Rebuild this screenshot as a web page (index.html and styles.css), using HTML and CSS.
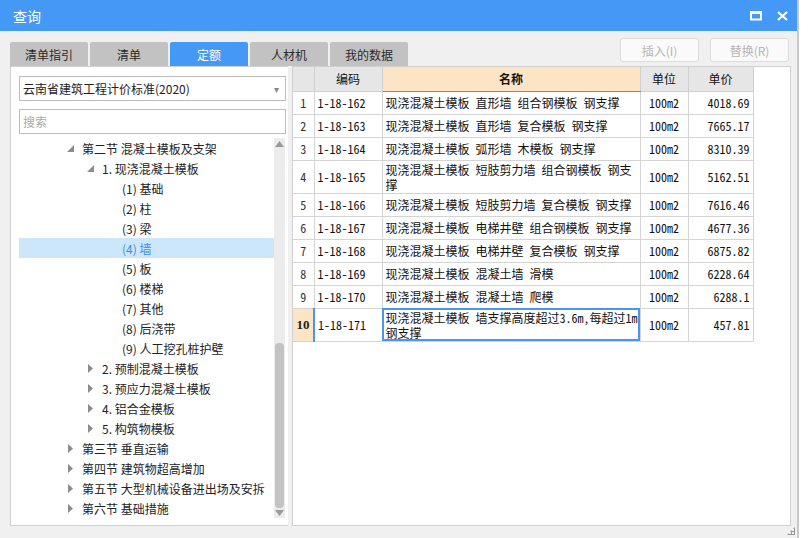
FILE: index.html
```html
<!DOCTYPE html>
<html lang="zh">
<head>
<meta charset="utf-8">
<title>查询</title>
<link rel="stylesheet" href="styles.css">
</head>
<body>
<div class="win">
  <div class="titlebar">
    <span class="title">查询</span>
    <div class="ctrls">
      <svg class="ic" width="12" height="10" viewBox="0 0 12 10"><rect x="1" y="1.5" width="10" height="7" fill="none" stroke="#fff" stroke-width="2"/><rect x="0" y="0" width="12" height="3" fill="#fff"/></svg>
      <svg class="ic" width="11" height="10" viewBox="0 0 11 10"><path d="M1 1 L10 9 M10 1 L1 9" stroke="#fff" stroke-width="2.2" fill="none"/></svg>
    </div>
  </div>
  <div class="toolbar">
    <div class="tabs">
      <div class="tab">清单指引</div>
      <div class="tab">清单</div>
      <div class="tab active">定额</div>
      <div class="tab">人材机</div>
      <div class="tab">我的数据</div>
    </div>
    <div class="actions">
      <button class="btn">插入(I)</button>
      <button class="btn">替换(R)</button>
    </div>
  </div>
  <div class="main">
    <div class="left">
      <div class="select"><span>云南省建筑工程计价标准(2020)</span><span class="caret">▾</span></div>
      <div class="search">搜索</div>
      <div class="treewrap">
        <div class="tree">
          <div class="row l0"><span class="tg"><svg width="7" height="7" viewBox="0 0 7 7"><path d="M7 0 L7 7 L0 7 Z" fill="#8c8c8c"/></svg></span>第二节 混凝土模板及支架</div>
          <div class="row l1"><span class="tg"><svg width="7" height="7" viewBox="0 0 7 7"><path d="M7 0 L7 7 L0 7 Z" fill="#8c8c8c"/></svg></span>1. 现浇混凝土模板</div>
          <div class="row l2"><span class="tg"></span>(1) 基础</div>
          <div class="row l2"><span class="tg"></span>(2) 柱</div>
          <div class="row l2"><span class="tg"></span>(3) 梁</div>
          <div class="row l2 sel"><span class="tg"></span>(4) 墙</div>
          <div class="row l2"><span class="tg"></span>(5) 板</div>
          <div class="row l2"><span class="tg"></span>(6) 楼梯</div>
          <div class="row l2"><span class="tg"></span>(7) 其他</div>
          <div class="row l2"><span class="tg"></span>(8) 后浇带</div>
          <div class="row l2"><span class="tg"></span>(9) 人工挖孔桩护壁</div>
          <div class="row l1"><span class="tg"><svg width="5" height="9" viewBox="0 0 5 9"><path d="M0 0 L5 4.5 L0 9 Z" fill="#8c8c8c"/></svg></span>2. 预制混凝土模板</div>
          <div class="row l1"><span class="tg"><svg width="5" height="9" viewBox="0 0 5 9"><path d="M0 0 L5 4.5 L0 9 Z" fill="#8c8c8c"/></svg></span>3. 预应力混凝土模板</div>
          <div class="row l1"><span class="tg"><svg width="5" height="9" viewBox="0 0 5 9"><path d="M0 0 L5 4.5 L0 9 Z" fill="#8c8c8c"/></svg></span>4. 铝合金模板</div>
          <div class="row l1"><span class="tg"><svg width="5" height="9" viewBox="0 0 5 9"><path d="M0 0 L5 4.5 L0 9 Z" fill="#8c8c8c"/></svg></span>5. 构筑物模板</div>
          <div class="row l0"><span class="tg"><svg width="5" height="9" viewBox="0 0 5 9"><path d="M0 0 L5 4.5 L0 9 Z" fill="#8c8c8c"/></svg></span>第三节 垂直运输</div>
          <div class="row l0"><span class="tg"><svg width="5" height="9" viewBox="0 0 5 9"><path d="M0 0 L5 4.5 L0 9 Z" fill="#8c8c8c"/></svg></span>第四节 建筑物超高增加</div>
          <div class="row l0"><span class="tg"><svg width="5" height="9" viewBox="0 0 5 9"><path d="M0 0 L5 4.5 L0 9 Z" fill="#8c8c8c"/></svg></span>第五节 大型机械设备进出场及安拆</div>
          <div class="row l0"><span class="tg"><svg width="5" height="9" viewBox="0 0 5 9"><path d="M0 0 L5 4.5 L0 9 Z" fill="#8c8c8c"/></svg></span>第六节 基础措施</div>
        </div>
        <div class="vscroll">
          <svg width="9" height="6" viewBox="0 0 9 6"><path d="M0 6 L4.5 0 L9 6 Z" fill="#9a9a9a"/></svg>
          <div class="track"><div class="thumb"></div></div>
          <svg width="9" height="6" viewBox="0 0 9 6"><path d="M0 0 L4.5 6 L9 0 Z" fill="#9a9a9a"/></svg>
        </div>
      </div>
    </div>
    <div class="right">
      <table class="grid">
        <colgroup><col class="c0"><col class="c1"><col class="c2"><col class="c3"><col class="c4"></colgroup>
        <thead>
          <tr><th></th><th>编码</th><th class="hsel">名称</th><th>单位</th><th>单价</th></tr>
        </thead>
        <tbody>
          <tr><td class="rn">1</td><td>1-18-162</td><td>现浇混凝土模板 直形墙 组合钢模板 钢支撑</td><td class="u">100m2</td><td class="p">4018.69</td></tr>
          <tr><td class="rn">2</td><td>1-18-163</td><td>现浇混凝土模板 直形墙 复合模板 钢支撑</td><td class="u">100m2</td><td class="p">7665.17</td></tr>
          <tr><td class="rn">3</td><td>1-18-164</td><td>现浇混凝土模板 弧形墙 木模板 钢支撑</td><td class="u">100m2</td><td class="p">8310.39</td></tr>
          <tr class="tall"><td class="rn">4</td><td>1-18-165</td><td>现浇混凝土模板 短肢剪力墙 组合钢模板 钢支<br>撑</td><td class="u">100m2</td><td class="p">5162.51</td></tr>
          <tr><td class="rn">5</td><td>1-18-166</td><td>现浇混凝土模板 短肢剪力墙 复合模板 钢支撑</td><td class="u">100m2</td><td class="p">7616.46</td></tr>
          <tr><td class="rn">6</td><td>1-18-167</td><td>现浇混凝土模板 电梯井壁 组合钢模板 钢支撑</td><td class="u">100m2</td><td class="p">4677.36</td></tr>
          <tr><td class="rn">7</td><td>1-18-168</td><td>现浇混凝土模板 电梯井壁 复合模板 钢支撑</td><td class="u">100m2</td><td class="p">6875.82</td></tr>
          <tr><td class="rn">8</td><td>1-18-169</td><td>现浇混凝土模板 混凝土墙 滑模</td><td class="u">100m2</td><td class="p">6228.64</td></tr>
          <tr><td class="rn">9</td><td>1-18-170</td><td>现浇混凝土模板 混凝土墙 爬模</td><td class="u">100m2</td><td class="p">6288.1</td></tr>
          <tr class="tall cur"><td class="rn rsel">10</td><td>1-18-171</td><td class="csel">现浇混凝土模板 墙支撑高度超过3.6m,每超过1m<br>钢支撑</td><td class="u">100m2</td><td class="p">457.81</td></tr>
        </tbody>
      </table>
    </div>
  </div>
  <div class="status"><span class="grip"></span></div>
</div>
</body>
</html>
```
FILE: styles.css
```css
* { box-sizing: border-box; }
html, body { margin: 0; padding: 0; }
body {
  width: 809px;
  height: 538px;
  background: #ffffff;
  font-family: "Noto Sans CJK SC", "Noto Sans", sans-serif;
  font-size: 12px;
  color: #222;
  overflow: hidden;
}
.win {
  width: 799px;
  height: 538px;
  background: #f0f0f0;
  border-right: 2px solid #c9c9c9;
  display: flex;
  flex-direction: column;
}
.titlebar {
  height: 31px;
  flex: none;
  background: #4399f5;
  display: flex;
  align-items: center;
  justify-content: space-between;
  padding: 0 9px 0 13px;
}
.title { color: #fff; font-size: 14px; }
.ctrls { display: flex; align-items: center; gap: 15px; }
.ic { display: block; }
.toolbar {
  height: 35px;
  flex: none;
  display: flex;
  justify-content: space-between;
  padding: 0 8px 0 10px;
}
.tabs { display: flex; gap: 2px; align-items: flex-end; }
.tab {
  width: 78px;
  height: 24px;
  background: #c2c2c2;
  border-radius: 2px 2px 0 0;
  display: flex;
  align-items: center;
  justify-content: center;
  color: #2a2a2a;
  font-size: 12px;
}
.tab.active { background: #4399f5; color: #fff; }
.actions { display: flex; gap: 11px; padding-top: 7px; }
.btn {
  width: 79px;
  height: 24px;
  background: #fafafa;
  border: 1px solid #dcdcdc;
  border-radius: 3px;
  color: #b5b5b5;
  font-family: "Noto Sans CJK SC", "Noto Sans", sans-serif;
  font-size: 12px;
  padding: 0;
}
.main {
  flex: none;
  height: 460px;
  display: flex;
  gap: 4px;
  padding-left: 10px;
}
.left {
  width: 278px;
  background: #fff;
  border: 1px solid #d0d0d0;
  border-right: none;
  padding: 9px 0 6px 8px;
  display: flex;
  flex-direction: column;
}
.select {
  width: 267px;
  height: 25px;
  border: 1px solid #bdbdbd;
  display: flex;
  align-items: center;
  justify-content: space-between;
  padding: 0 6px 0 3px;
  color: #222;
}
.caret { color: #888; font-size: 10px; }
.search {
  width: 267px;
  height: 25px;
  margin-top: 8px;
  border: 1px solid #bdbdbd;
  display: flex;
  align-items: center;
  padding-left: 3px;
  color: #aaa;
}
.treewrap {
  margin-top: 4px;
  height: 380px;
  display: flex;
}
.tree { width: 255px; }
.row {
  height: 20px;
  display: flex;
  align-items: center;
  color: #222;
  white-space: nowrap;
}
.row.l0 { padding-left: 44px; }
.row.l1 { padding-left: 64px; }
.row.l2 { padding-left: 84px; }
.tg {
  width: 14px;
  margin-right: 5px;
  display: flex;
  justify-content: center;
  align-items: center;
}
.row.sel { background: #cce6fb; color: #3d8fe6; }
.vscroll {
  width: 11px;
  background: #ececec;
  display: flex;
  flex-direction: column;
  align-items: center;
  padding: 3px 0 2px;
}
.track { flex: 1; width: 100%; padding: 0 1px 2px; display: flex; flex-direction: column; justify-content: flex-end; }
.thumb { height: 165px; background: #c3c3c3; border-radius: 4px; }
.right {
  width: 499px;
  background: #fff;
  border: 1px solid #d0d0d0;
}
.grid {
  border-collapse: collapse;
  table-layout: fixed;
  width: 460px;
  font-size: 12px;
  color: #111;
  font-family: "Noto Sans Mono CJK SC", "Noto Sans CJK SC", monospace;
}
.c0 { width: 21px; }
.c1 { width: 68px; }
.c2 { width: 258px; }
.c3 { width: 48px; }
.c4 { width: 65px; }
.grid th {
  height: 24px;
  background: #e6e6e6;
  border: 1px solid #cfcfcf;
  border-top: none;
  font-weight: normal;
  color: #111;
  padding: 0;
  font-family: "Noto Sans CJK SC", "Noto Sans", sans-serif;
}
.grid th:first-child { border-left: none; }
.grid th.hsel { background: #fde4c5; font-weight: bold; border-bottom: 1px solid #4a95ee; }
.grid td {
  height: 23px;
  border: 1px solid #d4d4d4;
  padding: 0 3px;
  line-height: 15px;
  white-space: nowrap;
  overflow: hidden;
}
.grid td:first-child { border-left: none; }
.grid tr.tall td { height: 33px; }
.grid td.rn { text-align: center; padding: 0; color: #333; }
.grid td.u { text-align: center; padding: 0; }
.grid td.p { text-align: right; padding-right: 3px; }
.grid td.rsel { background: #fde4c5; font-weight: bold; font-size: 13px; color: #222; border-right: 2px solid #4a95ee; font-family: "Liberation Serif", serif; }
.grid td.csel { outline: 2px solid #4a95ee; outline-offset: -2px; }
.status {
  flex: 1;
  display: flex;
  justify-content: flex-end;
  align-items: flex-end;
  padding: 0 2px 3px 0;
}
.grip {
  width: 8px;
  height: 8px;
  background:
    radial-gradient(circle, #999 1px, transparent 1.2px) 0 0 / 3px 3px;
  clip-path: polygon(100% 0, 100% 100%, 0 100%);
}
```
